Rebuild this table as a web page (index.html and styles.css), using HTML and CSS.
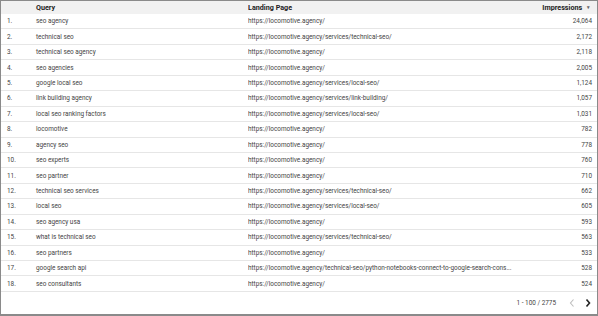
FILE: index.html
```html
<!DOCTYPE html>
<html>
<head>
<meta charset="utf-8">
<link rel="stylesheet" href="styles.css">
</head>
<body>
<div class="frame">
  <div class="table">
    <div class="row head">
      <div class="c-idx"></div>
      <div class="c-q">Query</div>
      <div class="c-lp">Landing Page</div>
      <div class="c-imp">Impressions <span class="sort">&#9662;</span></div>
    </div>
    <div class="row"><div class="c-idx">1.</div><div class="c-q">seo agency</div><div class="c-lp">https://locomotive.agency/</div><div class="c-imp">24,064</div></div>
    <div class="row"><div class="c-idx">2.</div><div class="c-q">technical seo</div><div class="c-lp">https://locomotive.agency/services/technical-seo/</div><div class="c-imp">2,172</div></div>
    <div class="row"><div class="c-idx">3.</div><div class="c-q">technical seo agency</div><div class="c-lp">https://locomotive.agency/</div><div class="c-imp">2,118</div></div>
    <div class="row"><div class="c-idx">4.</div><div class="c-q">seo agencies</div><div class="c-lp">https://locomotive.agency/</div><div class="c-imp">2,005</div></div>
    <div class="row"><div class="c-idx">5.</div><div class="c-q">google local seo</div><div class="c-lp">https://locomotive.agency/services/local-seo/</div><div class="c-imp">1,124</div></div>
    <div class="row"><div class="c-idx">6.</div><div class="c-q">link building agency</div><div class="c-lp">https://locomotive.agency/services/link-building/</div><div class="c-imp">1,057</div></div>
    <div class="row"><div class="c-idx">7.</div><div class="c-q">local seo ranking factors</div><div class="c-lp">https://locomotive.agency/services/local-seo/</div><div class="c-imp">1,031</div></div>
    <div class="row"><div class="c-idx">8.</div><div class="c-q">locomotive</div><div class="c-lp">https://locomotive.agency/</div><div class="c-imp">782</div></div>
    <div class="row"><div class="c-idx">9.</div><div class="c-q">agency seo</div><div class="c-lp">https://locomotive.agency/</div><div class="c-imp">778</div></div>
    <div class="row"><div class="c-idx">10.</div><div class="c-q">seo experts</div><div class="c-lp">https://locomotive.agency/</div><div class="c-imp">760</div></div>
    <div class="row"><div class="c-idx">11.</div><div class="c-q">seo partner</div><div class="c-lp">https://locomotive.agency/</div><div class="c-imp">710</div></div>
    <div class="row"><div class="c-idx">12.</div><div class="c-q">technical seo services</div><div class="c-lp">https://locomotive.agency/services/technical-seo/</div><div class="c-imp">662</div></div>
    <div class="row"><div class="c-idx">13.</div><div class="c-q">local seo</div><div class="c-lp">https://locomotive.agency/services/local-seo/</div><div class="c-imp">605</div></div>
    <div class="row"><div class="c-idx">14.</div><div class="c-q">seo agency usa</div><div class="c-lp">https://locomotive.agency/</div><div class="c-imp">593</div></div>
    <div class="row"><div class="c-idx">15.</div><div class="c-q">what is technical seo</div><div class="c-lp">https://locomotive.agency/services/technical-seo/</div><div class="c-imp">563</div></div>
    <div class="row"><div class="c-idx">16.</div><div class="c-q">seo partners</div><div class="c-lp">https://locomotive.agency/</div><div class="c-imp">533</div></div>
    <div class="row"><div class="c-idx">17.</div><div class="c-q">google search api</div><div class="c-lp">https://locomotive.agency/technical-seo/python-notebooks-connect-to-google-search-cons...</div><div class="c-imp">528</div></div>
    <div class="row"><div class="c-idx">18.</div><div class="c-q">seo consultants</div><div class="c-lp">https://locomotive.agency/</div><div class="c-imp">524</div></div>
  </div>
  <div class="pager">
    <span class="range">1 - 100 / 2775</span>
    <svg class="chev prev" width="8" height="10" viewBox="0 0 8 10"><path d="M5.5 1.5 L2.5 5 L5.5 8.5" fill="none" stroke="#bdbdbd" stroke-width="1.1"/></svg>
    <svg class="chev next" width="8" height="10" viewBox="0 0 8 10"><path d="M2.5 1.5 L5.5 5 L2.5 8.5" fill="none" stroke="#222" stroke-width="1.6"/></svg>
  </div>
</div>
</body>
</html>
```

FILE: styles.css
```css
html, body {
  margin: 0;
  padding: 0;
  background: #fff;
}
body {
  font-family: Roboto, "Liberation Sans", sans-serif;
  color: #444;
}
.frame {
  width: 598px;
  height: 316px;
  box-sizing: border-box;
  border: 1px solid #8a8a8a;
  border-bottom-width: 2px;
  display: flex;
  flex-direction: column;
  overflow: hidden;
}
.table {
  display: flex;
  flex-direction: column;
}
.row {
  display: flex;
  align-items: center;
  height: 15.45px;
  box-sizing: border-box;
  border-bottom: 1px solid #e6e6e6;
  font-size: 6.4px;
  white-space: nowrap;
}
.row.head {
  height: 13px;
  background: #f1f1f1;
  border-bottom: none;
  font-size: 7.2px;
  font-weight: 700;
  color: #222;
}
.c-idx {
  flex: 0 0 35px;
  padding-left: 6px;
  box-sizing: border-box;
}
.c-q {
  flex: 0 0 212px;
}
.c-lp {
  flex: 1 1 auto;
  min-width: 0;
  overflow: hidden;
}
.c-imp {
  flex: 0 0 80px;
  text-align: right;
  padding-right: 5px;
  box-sizing: border-box;
}
.head .c-imp {
  padding-right: 7px;
}
.sort {
  font-size: 5px;
  color: #666;
  margin-left: 3px;
  vertical-align: 1px;
}
.pager {
  margin-top: auto;
  height: 24px;
  display: flex;
  align-items: center;
  justify-content: flex-end;
  font-size: 6.4px;
  color: #444;
  padding-right: 5px;
}
.range {
  margin-right: 12px;
}
.chev {
  display: block;
}
.chev.prev {
  margin-right: 8px;
}
```
